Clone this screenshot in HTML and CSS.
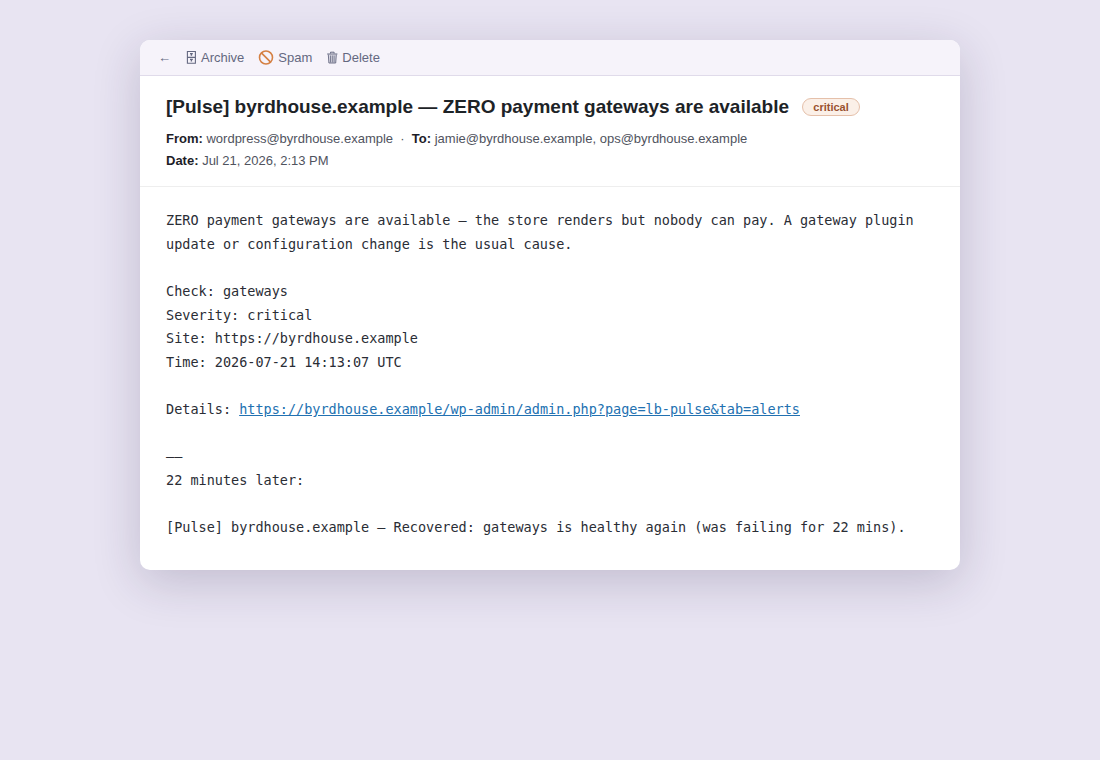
FILE: index.html
```html
<!DOCTYPE html>
<html lang="en">
<head>
    <meta charset="UTF-8">
    <meta name="viewport" content="width=device-width, initial-scale=1.0">
    <title>Pulse alert email</title>
    <link rel="stylesheet" href="styles.css">
</head>
<body>
    <div class="mail">
        <div class="bar">
            <span>←</span>
            <span class="action">
                <svg class="icon" width="12" height="16" viewBox="0 0 12 16" fill="none" stroke="currentColor">
                    <path d="M2.4 1.5h8v11.8h-8zM2.4 7.4h8" stroke-width="1.1"/>
                    <path d="M5 3.6h2.8M5 9.4h2.8" stroke-width="1.3"/>
                    <path d="M6.4 4v1.8M6.4 9.6v2" stroke-width="1.4"/>
                </svg>Archive
            </span>
            <span class="action">
                <svg class="icon" width="16" height="16" viewBox="0 0 16 16" fill="none" stroke="#d58043" stroke-width="1.6">
                    <circle cx="8" cy="7.5" r="6.5"/>
                    <path d="M3.4 2.9l9.2 9.2"/>
                </svg>Spam
            </span>
            <span class="action">
                <svg class="icon" width="12" height="16" viewBox="0 0 12 16" fill="none" stroke="currentColor">
                    <path d="M1.2 4h10.2M4.5 3.5V2.2h3.6v1.3"/>
                    <path d="M2.3 4.5l.6 8.5h6.8l.6-8.5" fill="currentColor" fill-opacity=".2" stroke-width=".9"/>
                    <path d="M4.5 5.5v7M6.3 5.5v7M8.1 5.5v7" stroke-width=".8"/>
                </svg>Delete
            </span>
        </div>
        <div class="head">
            <h1>[Pulse] byrdhouse.example — ZERO payment gateways are available <span class="pill">critical</span></h1>
            <div class="meta">
                <b>From:</b> wordpress@byrdhouse.example &nbsp;·&nbsp; <b>To:</b> jamie@byrdhouse.example, ops@byrdhouse.example<br>
                <b>Date:</b> Jul 21, 2026, 2:13 PM
            </div>
        </div>
        <div class="body">ZERO payment gateways are available — the store renders but nobody can pay. A gateway plugin update or configuration change is the usual cause.

Check: gateways
Severity: critical
Site: https://byrdhouse.example
Time: 2026-07-21 14:13:07 UTC

Details: <a href="#">https://byrdhouse.example/wp-admin/admin.php?page=lb-pulse&amp;tab=alerts</a>

——
22 minutes later:

[Pulse] byrdhouse.example — Recovered: gateways is healthy again (was failing for 22 mins).</div>
    </div>
</body>
</html>
```
FILE: styles.css
```css
body {
    margin: 0;
    padding: 40px;
    min-height: 100vh;
    box-sizing: border-box;
    background: #e8e4f2;
    font-family: "Liberation Sans", Arial, sans-serif;
    color: #1d2327;
}
.mail {
    width: 820px;
    margin: 0 auto;
    background: #fff;
    border-radius: 10px;
    box-shadow: 0 12px 48px rgba(40, 30, 70, 0.2);
    overflow: hidden;
}
.bar {
    display: flex;
    gap: 14px;
    height: 15px;
    padding: 10px 18px;
    background: #f6f3fa;
    border-bottom: 1px solid #e0dbea;
    color: #646880;
    font-size: 13px;
    line-height: 15px;
}
.action {
    display: flex;
    align-items: center;
    gap: 4px;
}
.head {
    padding: 20px 26px 14px;
    border-bottom: 1px solid #eee;
}
h1 {
    margin: 0 0 10px;
    font-size: 19px;
}
.pill {
    display: inline-block;
    margin-left: 8px;
    padding: 2px 10px;
    border: 1px solid #e5c0aa;
    border-radius: 10px;
    background: #fbf0e8;
    color: #9a5230;
    font-size: 11px;
    vertical-align: 2px;
}
.meta {
    color: #50535e;
    font-size: 13px;
    line-height: 1.7;
}
.meta b {
    color: #1d1d27;
}
.body {
    padding: 22px 26px 30px;
    font-family: "DejaVu Sans Mono", monospace;
    font-size: 13.5px;
    line-height: 1.75;
    white-space: pre-wrap;
    color: #2a2d35;
}
.body a {
    color: #2271b1;
}
```
